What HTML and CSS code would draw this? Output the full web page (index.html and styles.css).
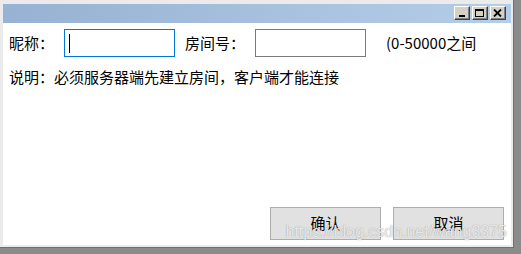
FILE: index.html
```html
<!DOCTYPE html>
<html lang="zh-CN">
<head>
<meta charset="utf-8">
<title>Dialog</title>
<link rel="stylesheet" href="styles.css">
</head>
<body>
<div class="window">
  <div class="titlebar">
    <div class="tbtn"><span class="g-min"></span></div>
    <div class="tbtn"><span class="g-max"></span></div>
    <div class="tbtn close">
      <svg width="9" height="8" viewBox="0 0 9 8"><path d="M1 0.5 L8 7.5 M8 0.5 L1 7.5" stroke="#000" stroke-width="1.8"/></svg>
    </div>
  </div>
  <div class="client">
    <div class="row">
      <span class="lbl nick">昵称：</span>
      <div class="input focus"><span class="caret"></span></div>
      <span class="lbl room">房间号：</span>
      <div class="input"></div>
      <span class="lbl range">(0-50000之间</span>
    </div>
    <div class="desc">说明：必须服务器端先建立房间，客户端才能连接</div>
    <div class="actions">
      <button class="btn">确认</button>
      <button class="btn">取消</button>
    </div>
    <div class="watermark">https://blog.csdn.net/wang3375</div>
  </div>
</div>
</body>
</html>
```
FILE: styles.css
```css
* { box-sizing: border-box; }
html, body { margin: 0; padding: 0; }
body {
  width: 521px;
  height: 254px;
  background: #8b8b8b;
  font-family: "Noto Sans CJK SC", "Noto Sans", sans-serif;
  font-size: 15px;
  color: #000;
  overflow: hidden;
}
.window {
  width: 514px;
  height: 248px;
  background: #ebebeb;
  padding: 4px 2px 2px 3px;
  border-right: 1px solid #6f6f6f;
  border-bottom: 1px solid #6f6f6f;
  display: flex;
  flex-direction: column;
}
.titlebar {
  height: 19px;
  background: linear-gradient(to right, #97b2d2, #b4cee9);
  display: flex;
  justify-content: flex-end;
  align-items: flex-start;
  padding: 2px 5px 0 0;
  gap: 2px;
  flex-shrink: 0;
}
.tbtn {
  width: 16px;
  height: 14px;
  background: #d4d0c8;
  border-top: 1px solid #fff;
  border-left: 1px solid #fff;
  border-right: 1px solid #404040;
  border-bottom: 1px solid #404040;
  box-shadow: inset -1px -1px 0 #808080;
  position: relative;
  display: flex;
  align-items: center;
  justify-content: center;
}
.g-min {
  position: absolute;
  left: 4px;
  top: 8px;
  width: 6px;
  height: 2px;
  background: #000;
}
.g-max {
  width: 9px;
  height: 8px;
  border: 1px solid #000;
  border-top-width: 2px;
  margin-right: 1px;
}
.close svg { display: block; margin-right: 1px; }
.client {
  flex: 1;
  background: #fff;
  padding: 6px 7px 5px 6px;
  display: flex;
  flex-direction: column;
  position: relative;
}
.row {
  display: flex;
  align-items: center;
  height: 28px;
}
.lbl { white-space: nowrap; line-height: 20px; }
.nick { width: 55px; }
.room { width: 70px; margin-left: 10px; }
.range { margin-left: 20px; }
.input {
  width: 111px;
  height: 28px;
  border: 1px solid #7a7a7a;
  background: #fff;
  position: relative;
}
.input.focus { border-color: #0078d7; }
.caret {
  position: absolute;
  left: 4px;
  top: 4px;
  width: 1px;
  height: 19px;
  background: #000;
}
.desc {
  margin-top: 10px;
  line-height: 20px;
  white-space: nowrap;
}
.actions {
  margin-top: auto;
  display: flex;
  justify-content: flex-end;
  gap: 12px;
}
.btn {
  width: 111px;
  height: 33px;
  background: #e1e1e1;
  border: 1px solid #adadad;
  font-family: inherit;
  font-size: 15px;
  line-height: 20px;
  color: #000;
  padding: 0 0 2px 0;
}
.watermark {
  position: absolute;
  right: 4px;
  bottom: 4px;
  font-family: "Liberation Sans", Arial, sans-serif;
  font-size: 16px;
  color: rgba(255, 255, 255, 0.8);
  text-shadow: 0 0 1px rgba(110, 110, 110, 0.8);
  pointer-events: none;
}
```
